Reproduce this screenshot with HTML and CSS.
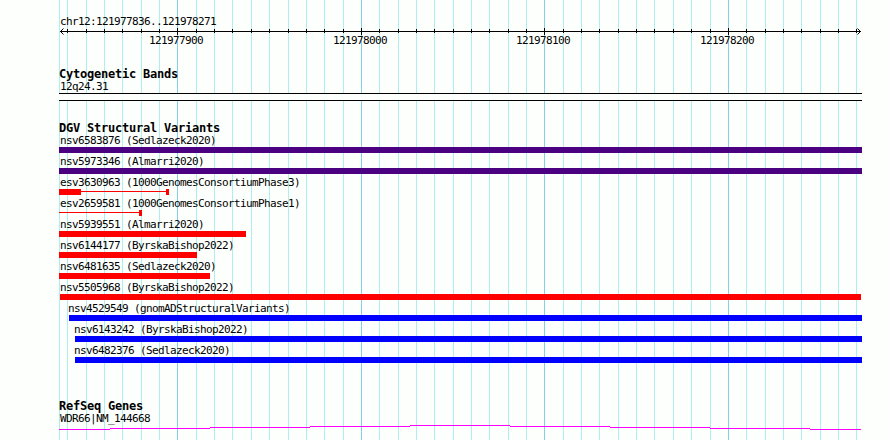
FILE: index.html
```
<!DOCTYPE html>
<html lang="en">

<head>
  <meta charset="UTF-8" />
  <meta name="viewport" content="width=device-width, initial-scale=1.0" />
  <title>chr12:121977836..121978271</title>
  <link rel="stylesheet" href="styles.css">
</head>

<body>
  <div class="browser">

    <!-- vertical grid, one line every 10 bp -->
    <svg class="grid" width="890" height="440" viewBox="0 0 890 440">
      <path class="grid-minor" d="M59.5 0V440M67.5 0V440M86.5 0V440M104.5 0V440M122.5 0V440M141.5 0V440M159.5 0V440M196.5 0V440M214.5 0V440M232.5 0V440M251.5 0V440M269.5 0V440M288.5 0V440M306.5 0V440M324.5 0V440M343.5 0V440M379.5 0V440M398.5 0V440M416.5 0V440M434.5 0V440M453.5 0V440M471.5 0V440M489.5 0V440M508.5 0V440M526.5 0V440M563.5 0V440M581.5 0V440M599.5 0V440M618.5 0V440M636.5 0V440M654.5 0V440M673.5 0V440M691.5 0V440M710.5 0V440M746.5 0V440M765.5 0V440M783.5 0V440M801.5 0V440M820.5 0V440M838.5 0V440M856.5 0V440" />
      <path class="grid-major" d="M177.5 0V440M361.5 0V440M544.5 0V440M728.5 0V440" />
    </svg>

    <main class="tracks">
      <section class="overview">
        <p class="label">chr12:121977836..121978271</p>
        <svg class="ruler" width="803" height="22" viewBox="59 26 803 22">
          <path class="axis" d="M60 31.5H861" />
          <path class="axis" d="M67.5 29v4M86.5 29v4M104.5 29v4M122.5 29v4M141.5 29v4M159.5 29v4M196.5 29v4M214.5 29v4M232.5 29v4M251.5 29v4M269.5 29v4M288.5 29v4M306.5 29v4M324.5 29v4M343.5 29v4M379.5 29v4M398.5 29v4M416.5 29v4M434.5 29v4M453.5 29v4M471.5 29v4M489.5 29v4M508.5 29v4M526.5 29v4M563.5 29v4M581.5 29v4M599.5 29v4M618.5 29v4M636.5 29v4M654.5 29v4M673.5 29v4M691.5 29v4M710.5 29v4M746.5 29v4M765.5 29v4M783.5 29v4M801.5 29v4M820.5 29v4M838.5 29v4M856.5 29v4" />
          <path class="axis" d="M177.5 28v7M361.5 28v7M544.5 28v7M728.5 28v7" />
          <path class="arrow" d="M63.5 28.5L60.5 31.5L63.5 34.5M857.5 28.5L860.5 31.5L857.5 34.5" />
          <text x="149" y="44">121977900</text>
          <text x="333" y="44">121978000</text>
          <text x="516" y="44">121978100</text>
          <text x="700" y="44">121978200</text>
        </svg>
      </section>

      <section class="cytobands">
        <h2>Cytogenetic Bands</h2>
        <p class="label">12q24.31</p>
        <div class="band"></div>
      </section>

      <section class="variants">
        <h2>DGV Structural Variants</h2>
        <div class="feature">
          <p class="label">nsv6583876 (Sedlazeck2020)</p>
          <div class="bar complex" style="width: 803px"></div>
        </div>
        <div class="feature">
          <p class="label">nsv5973346 (Almarri2020)</p>
          <div class="bar complex" style="width: 803px"></div>
        </div>
        <div class="feature">
          <p class="label">esv3630963 (1000GenomesConsortiumPhase3)</p>
          <div class="parts">
            <div class="bar loss" style="width: 22px"></div>
            <div class="connector" style="width: 85px"></div>
            <div class="bar loss" style="width: 3px"></div>
          </div>
        </div>
        <div class="feature">
          <p class="label">esv2659581 (1000GenomesConsortiumPhase1)</p>
          <div class="parts">
            <div class="connector" style="width: 80px"></div>
            <div class="bar loss" style="width: 3px"></div>
          </div>
        </div>
        <div class="feature">
          <p class="label">nsv5939551 (Almarri2020)</p>
          <div class="bar loss" style="width: 187px"></div>
        </div>
        <div class="feature">
          <p class="label">nsv6144177 (ByrskaBishop2022)</p>
          <div class="bar loss" style="width: 138px"></div>
        </div>
        <div class="feature">
          <p class="label">nsv6481635 (Sedlazeck2020)</p>
          <div class="bar loss" style="width: 151px"></div>
        </div>
        <div class="feature">
          <p class="label">nsv5505968 (ByrskaBishop2022)</p>
          <div class="bar loss" style="width: 801px; margin-left: 1px"></div>
        </div>
        <div class="feature">
          <p class="label" style="margin-left: 8px">nsv4529549 (gnomADStructuralVariants)</p>
          <div class="bar gain" style="width: 793px; margin-left: 10px"></div>
        </div>
        <div class="feature">
          <p class="label" style="margin-left: 14px">nsv6143242 (ByrskaBishop2022)</p>
          <div class="bar gain" style="width: 787px; margin-left: 16px"></div>
        </div>
        <div class="feature">
          <p class="label" style="margin-left: 14px">nsv6482376 (Sedlazeck2020)</p>
          <div class="bar gain" style="width: 787px; margin-left: 16px"></div>
        </div>
      </section>

      <section class="genes">
        <h2>RefSeq Genes</h2>
        <p class="label">WDR66|NM_144668</p>
        <svg class="intron" width="803" height="6" viewBox="59 425 803 6">
          <path d="M59 429.5H110M110 428.5H210M210 427.5H310M310 426.5H410M410 425.5H510M510 426.5H610M610 427.5H710M710 428.5H810M810 429.5H861" />
        </svg>
      </section>
    </main>

  </div>
</body>

</html>
```

FILE: styles.css
```
* {
  box-sizing: border-box;
}

body {
  margin: 0;
  background: #fdfffc;
  color: #000;
  font-family: "DejaVu Sans Mono", monospace;
  font-size: 11px;
}

h2,
p {
  margin: 0;
}

svg {
  display: block;
}

/* grid lines and tracks share one cell, tracks on top */
.browser {
  display: grid;
  width: 890px;
  height: 440px;
  overflow: hidden;
}

.grid,
.tracks {
  grid-area: 1 / 1;
}

.grid path {
  stroke-width: 1;
  shape-rendering: crispEdges;
}

.grid-minor {
  stroke: #afeeee;
}

.grid-major {
  stroke: #87ceeb;
}

.tracks {
  width: 862px;
  padding: 14px 0 0 59px;
}

h2 {
  height: 13px;
  line-height: 13px;
  font-size: 12px;
  font-weight: bold;
  letter-spacing: -0.225px;
  white-space: nowrap;
}

.label {
  height: 12px;
  padding-left: 1px;
  line-height: 12px;
  letter-spacing: -0.623px;
  white-space: nowrap;
}

/* ruler */
.overview {
  height: 54px;
}

.overview .label {
  line-height: 16px;
}

.axis {
  stroke: #000;
  shape-rendering: crispEdges;
}

.arrow {
  fill: none;
  stroke: #000;
}

.ruler text {
  letter-spacing: -0.623px;
}

/* cytogenetic bands */
.cytobands {
  height: 54px;
}

.band {
  height: 8px;
  border-top: 1px solid #000;
  border-bottom: 1px solid #000;
  background: #fdfffc;
}

/* structural variants */
.variants {
  height: 278px;
}

.feature {
  height: 21px;
}

.parts {
  display: flex;
}

.bar {
  height: 6px;
}

.connector {
  height: 1px;
  margin-top: 2px;
  background: #f00;
}

.complex {
  background: #4b0082;
}

.loss {
  background: #f00;
}

.gain {
  background: #00f;
}

/* genes */
.intron path {
  stroke: #f0f;
  shape-rendering: crispEdges;
}
```
